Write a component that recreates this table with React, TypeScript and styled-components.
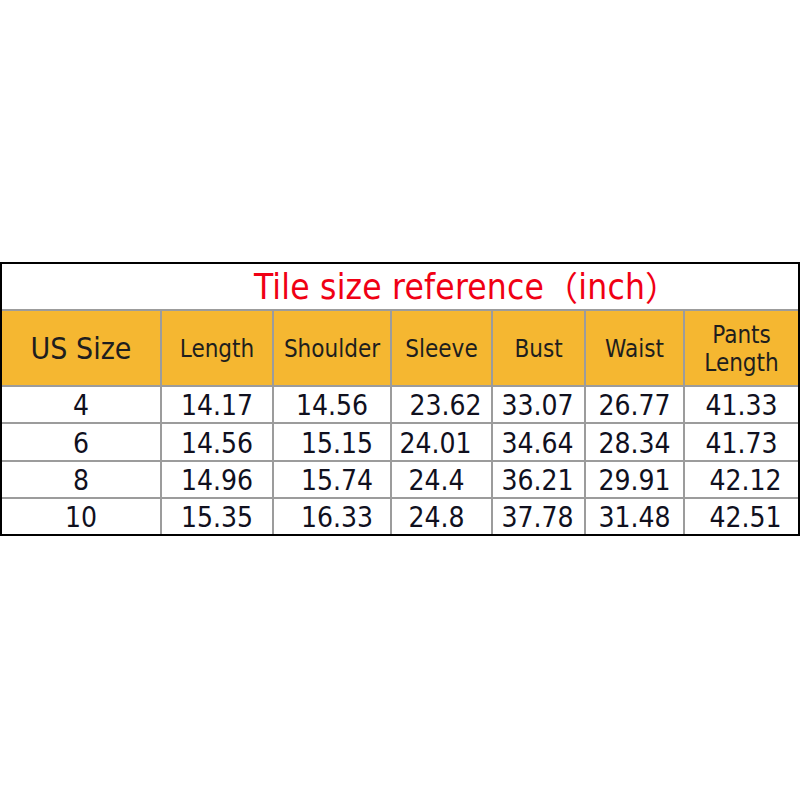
import React from "react";
import styled, { createGlobalStyle } from "styled-components";

const GlobalStyle = createGlobalStyle`
  html, body {
    margin: 0;
    padding: 0;
    background: #fff;
  }
  body {
    font-family: "DejaVu Sans Condensed", "DejaVu Sans", "Noto Sans", sans-serif;
  }
`;

const Page = styled.div`
  width: 800px;
  height: 800px;
  padding-top: 262px;
  box-sizing: border-box;
`;

const Table = styled.div`
  width: 800px;
  box-sizing: border-box;
  border: 2px solid #000;
  display: grid;
  grid-template-columns: 158px 110px 116px 99px 91px 97px 113px;
  grid-template-rows: 45px 74px 35px 36px 35px 35px;
  gap: 2px;
  background: #9c9c9c;
`;

const Title = styled.div`
  grid-column: 1 / -1;
  background: #fff;
  display: flex;
  align-items: center;
  padding-left: 252px;
  color: #f00014;
  font-size: 35px;
  letter-spacing: 0.2px;
`;

const Paren = styled.span`
  font-family: "Noto Sans CJK SC", sans-serif;
  font-size: 34px;
`;

const HeadCell = styled.div<{ $big?: boolean }>`
  background: #f5b731;
  color: #1e1e1e;
  display: flex;
  align-items: center;
  justify-content: center;
  text-align: center;
  font-size: ${(p) => (p.$big ? "30px" : "24px")};
  line-height: 28px;
  padding-top: 2px;
`;

const Cell = styled.div<{ $dx?: number }>`
  background: #fff;
  color: #10101e;
  display: flex;
  align-items: center;
  justify-content: center;
  font-size: 28px;
  padding-top: 2px;
  padding-left: ${(p) => Math.max(0, (p.$dx ?? 0) * 2)}px;
  padding-right: ${(p) => Math.max(0, -(p.$dx ?? 0) * 2)}px;
`;

const headers = ["Length", "Shoulder", "Sleeve", "Bust", "Waist"];

type Value = [string, number?];

const rows: Value[][] = [
  [["4"], ["14.17"], ["14.56"], ["23.62", 4], ["33.07", -1], ["26.77"], ["41.33"]],
  [["6"], ["14.56"], ["15.15", 5], ["24.01", -6], ["34.64", -1], ["28.34"], ["41.73"]],
  [["8"], ["14.96"], ["15.74", 5], ["24.4", -5], ["36.21", -1], ["29.91"], ["42.12", 4]],
  [["10"], ["15.35"], ["16.33", 5], ["24.8", -5], ["37.78", -1], ["31.48"], ["42.51", 4]],
];

const App: React.FC = () => {
  return (
    <Page>
      <GlobalStyle />
      <Table>
        <Title>
          Tile size reference<Paren>（</Paren>inch<Paren>）</Paren>
        </Title>
        <HeadCell $big>US Size</HeadCell>
        {headers.map((h) => (
          <HeadCell key={h}>{h}</HeadCell>
        ))}
        <HeadCell>
          Pants
          <br />
          Length
        </HeadCell>
        {rows.map((row, i) =>
          row.map(([v, dx], j) => (
            <Cell key={`${i}-${j}`} $dx={dx}>
              {v}
            </Cell>
          ))
        )}
      </Table>
    </Page>
  );
};

export default App;
